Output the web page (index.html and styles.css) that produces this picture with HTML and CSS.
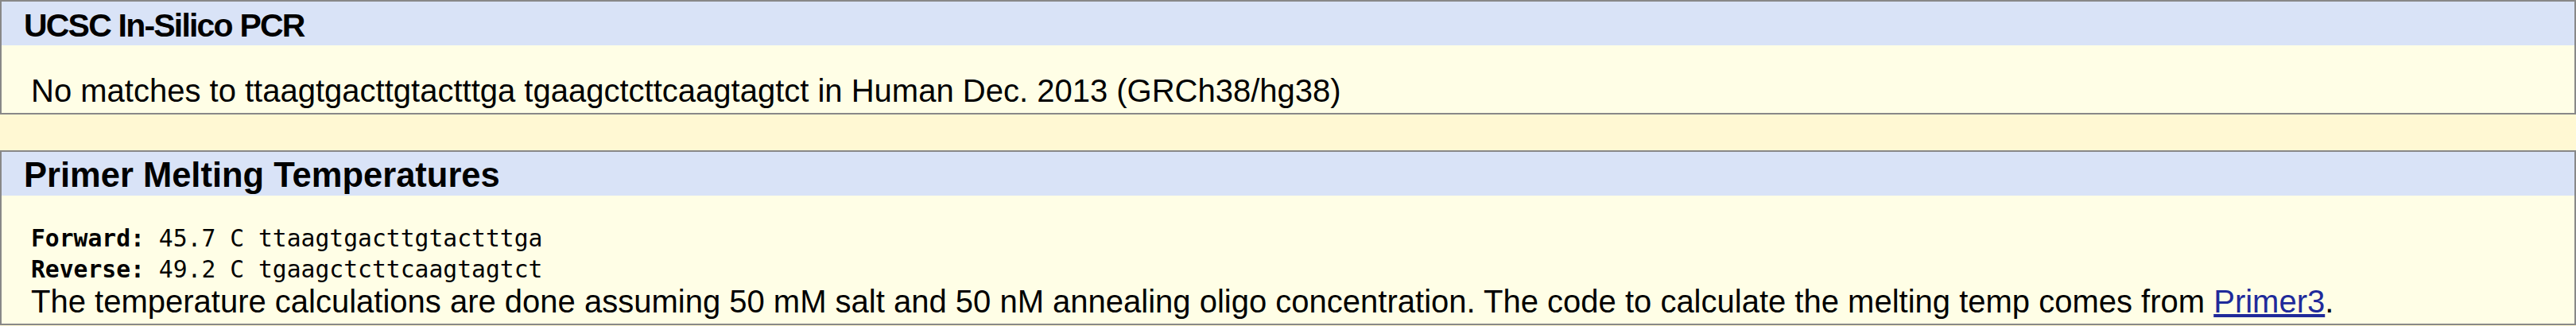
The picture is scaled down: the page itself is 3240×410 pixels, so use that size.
FILE: index.html
```html
<!DOCTYPE html>
<html>
<head>
<meta charset="utf-8">
<title>UCSC In-Silico PCR</title>
<link rel="stylesheet" href="styles.css">
</head>
<body>
<div class="box">
  <div class="box-head condensed">UCSC In-Silico PCR</div>
  <div class="box-body first">
    <p class="txt">No matches to ttaagtgacttgtactttga tgaagctcttcaagtagtct in Human Dec. 2013 (GRCh38/hg38)</p>
  </div>
</div>
<div class="gap"></div>
<div class="box">
  <div class="box-head large">Primer Melting Temperatures</div>
  <div class="box-body second">
<pre class="mono"><b>Forward:</b> 45.7 C ttaagtgacttgtactttga
<b>Reverse:</b> 49.2 C tgaagctcttcaagtagtct</pre>
    <p class="txt tight">The temperature calculations are done assuming 50 mM salt and 50 nM annealing oligo concentration. The code to calculate the melting temp comes from <a href="#">Primer3</a>.</p>
  </div>
</div>
</body>
</html>
```
FILE: styles.css
```css
html, body {
  margin: 0;
  padding: 0;
}
body {
  background: #FFF8D3;
  font-family: "Liberation Sans", Arial, sans-serif;
  color: #000;
}
.box {
  border: 2px solid #888888;
  background: #FFFEE6;
}
.box-head {
  background: #D9E3F7;
  height: 51px;
  padding: 4px 0 0 28px;
  font-weight: bold;
  font-size: 37.5px;
  line-height: 55px;
  white-space: nowrap;
}
.box-head.condensed {
  font-size: 41px;
  letter-spacing: -1.8px;
  line-height: 52px;
}
.box-head.large {
  font-size: 43.5px;
  line-height: 50px;
}
.box-body {
  padding-left: 37px;
}
.box-body.first {
  padding-top: 33px;
  padding-bottom: 4px;
}
.box-body.second {
  padding-top: 34px;
  padding-bottom: 7px;
}
.txt {
  margin: 0;
  font-size: 40px;
  line-height: 48px;
  white-space: nowrap;
}
.txt.tight {
  line-height: 42px;
}
.mono {
  margin: 0;
  font-family: "DejaVu Sans Mono", "Liberation Mono", monospace;
  font-size: 29.7px;
  line-height: 39px;
}
.gap {
  height: 45px;
}
a {
  color: #202A9A;
}
```
